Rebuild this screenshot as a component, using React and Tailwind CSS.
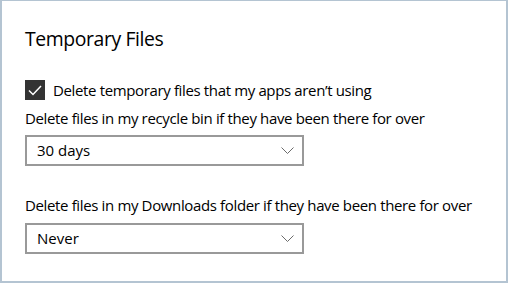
import React from "react";

function Chevron() {
  return (
    <svg width="13" height="7" viewBox="0 0 13 7" className="block">
      <path d="M0.5 0.5 L6.5 6.5 L12.5 0.5" fill="none" stroke="#6b6b6b" strokeWidth="1" />
    </svg>
  );
}

function Select({ value }) {
  return (
    <div className="w-[279px] h-[31px] border-2 border-[#999999] bg-white flex items-center justify-between pl-[10px] pr-[8px]">
      <span className="text-[15px] text-[#000000] leading-none">{value}</span>
      <Chevron />
    </div>
  );
}

export default function App() {
  return (
    <div className="w-[509px] h-[284px] bg-white" style={{ fontFamily: '"Open Sans", "Noto Sans", sans-serif' }}>
      <div className="w-[508px] h-[283px] border-l-2 border-t border-r-2 border-b-2 border-[#b4c4d2] bg-white pl-[23px] pt-[24px] text-[#000000]">
        <div className="text-[19.4px] leading-[28px] font-normal tracking-[-0.4px]">Temporary Files</div>
        <div className="mt-[27px] flex items-center h-[20px]">
          <div className="w-[20px] h-[20px] bg-[#333333] flex items-center justify-center">
            <svg width="14" height="11" viewBox="0 0 14 11">
              <path d="M1 5.5 L5 9.5 L13 1" fill="none" stroke="#ffffff" strokeWidth="1.5" />
            </svg>
          </div>
          <span className="ml-[8px] text-[15px] leading-none tracking-[-0.36px]">Delete temporary files that my apps aren’t using</span>
        </div>
        <div className="mt-[8px] text-[15px] leading-[20px] tracking-[-0.36px]">Delete files in my recycle bin if they have been there for over</div>
        <div className="mt-[7px]">
          <Select value="30 days" />
        </div>
        <div className="mt-[29px] text-[15px] leading-[20px] tracking-[-0.36px]">Delete files in my Downloads folder if they have been there for over</div>
        <div className="mt-[8px]">
          <Select value="Never" />
        </div>
      </div>
    </div>
  );
}
